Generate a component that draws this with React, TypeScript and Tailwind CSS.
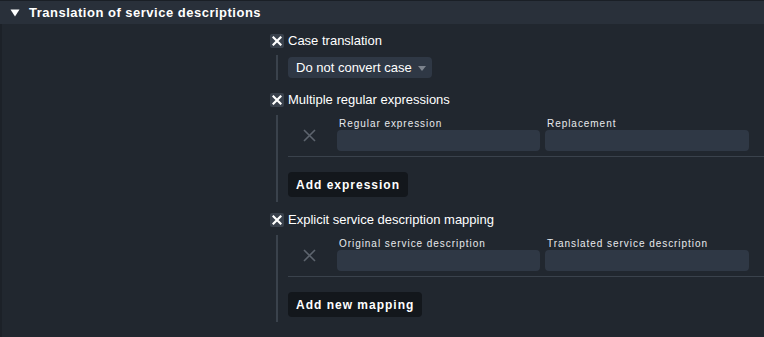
import { ReactNode } from 'react';

function Check({ label }: { label: string }) {
  return (
    <div className="flex items-center h-[14px]">
      <span className="w-[14px] h-[14px] bg-[#39414c] rounded-[2px] flex items-center justify-center">
        <svg width="10" height="10" viewBox="0 0 10 10">
          <path d="M1.5 1.5 L8.5 8.5 M8.5 1.5 L1.5 8.5" stroke="#fff" strokeWidth="2.2" strokeLinecap="square" />
        </svg>
      </span>
      <span className="ml-[4px] text-[13px] text-white">{label}</span>
    </div>
  );
}

function Nested({ children }: { children: ReactNode }) {
  return <div className="ml-[6px] border-l-2 border-[#3a424c] pl-[10px]">{children}</div>;
}

function ListRow({ left, right }: { left: string; right: string }) {
  return (
    <div className="border-b border-[#3a424c] pt-[3px] pb-[5px]">
      <div className="flex items-center">
        <div className="w-[49px] flex justify-center pr-[6px] pt-[1px]">
          <svg width="13" height="13" viewBox="0 0 13 13">
            <path d="M1 1 L12 12 M12 1 L1 12" stroke="#5d646e" strokeWidth="1.6" />
          </svg>
        </div>
        <div className="w-[203px] flex flex-col">
          <span className="pl-[2px] text-[10px] leading-[12px] tracking-[0.95px] text-[#e8eaed]">{left}</span>
          <div className="h-[21px] bg-[#2f3845] rounded-[4px]" />
        </div>
        <div className="w-[204px] ml-[5px] flex flex-col">
          <span className="pl-[2px] text-[10px] leading-[12px] tracking-[0.95px] text-[#e8eaed]">{right}</span>
          <div className="h-[21px] bg-[#2f3845] rounded-[4px]" />
        </div>
      </div>
    </div>
  );
}

function AddButton({ label }: { label: string }) {
  return (
    <button className="mt-[15px] h-[25px] px-[8px] bg-[#13171c] rounded-[4px] text-[12px] font-bold tracking-[1px] text-white">
      {label}
    </button>
  );
}

export default function App() {
  return (
    <div className="w-[764px] h-[337px] bg-[#21272f] border-t border-[#1a1f26] font-['Liberation_Sans',Arial,sans-serif] overflow-hidden">
      <div className="h-[23px] bg-[#29303a] flex items-center pl-[10px]">
        <svg width="10" height="8" viewBox="0 0 10 8">
          <path d="M0.5 0.5 H9.5 L5 7.5 Z" fill="#fff" />
        </svg>
        <span className="ml-[9px] text-[13px] font-bold tracking-[0.5px] text-white">
          Translation of service descriptions
        </span>
      </div>
      <div className="flex h-full border-l-2 border-[#1c2128]">
        <div className="w-[268px]" />
        <div className="flex-1 pt-[10px]">
          <Check label="Case translation" />
          <div className="mt-[7px]">
            <Nested>
              <div className="py-[2px]">
                <div className="w-[144px] h-[21px] bg-[#2f3845] rounded-[4px] flex items-center pl-[8px]">
                  <span className="text-[13px] text-white">Do not convert case</span>
                  <svg className="ml-[6px] mt-[2px]" width="8" height="5" viewBox="0 0 8 5">
                    <path d="M0 0 H8 L4 5 Z" fill="#7c838d" />
                  </svg>
                </div>
              </div>
            </Nested>
          </div>
          <div className="mt-[13px]">
            <Check label="Multiple regular expressions" />
          </div>
          <div className="mt-[8px]">
            <Nested>
              <div className="pb-[5px]">
                <ListRow left="Regular expression" right="Replacement" />
                <AddButton label="Add expression" />
              </div>
            </Nested>
          </div>
          <div className="mt-[11px]">
            <Check label="Explicit service description mapping" />
          </div>
          <div className="mt-[8px]">
            <Nested>
              <div className="pb-[5px]">
                <ListRow left="Original service description" right="Translated service description" />
                <AddButton label="Add new mapping" />
              </div>
            </Nested>
          </div>
        </div>
      </div>
    </div>
  );
}
